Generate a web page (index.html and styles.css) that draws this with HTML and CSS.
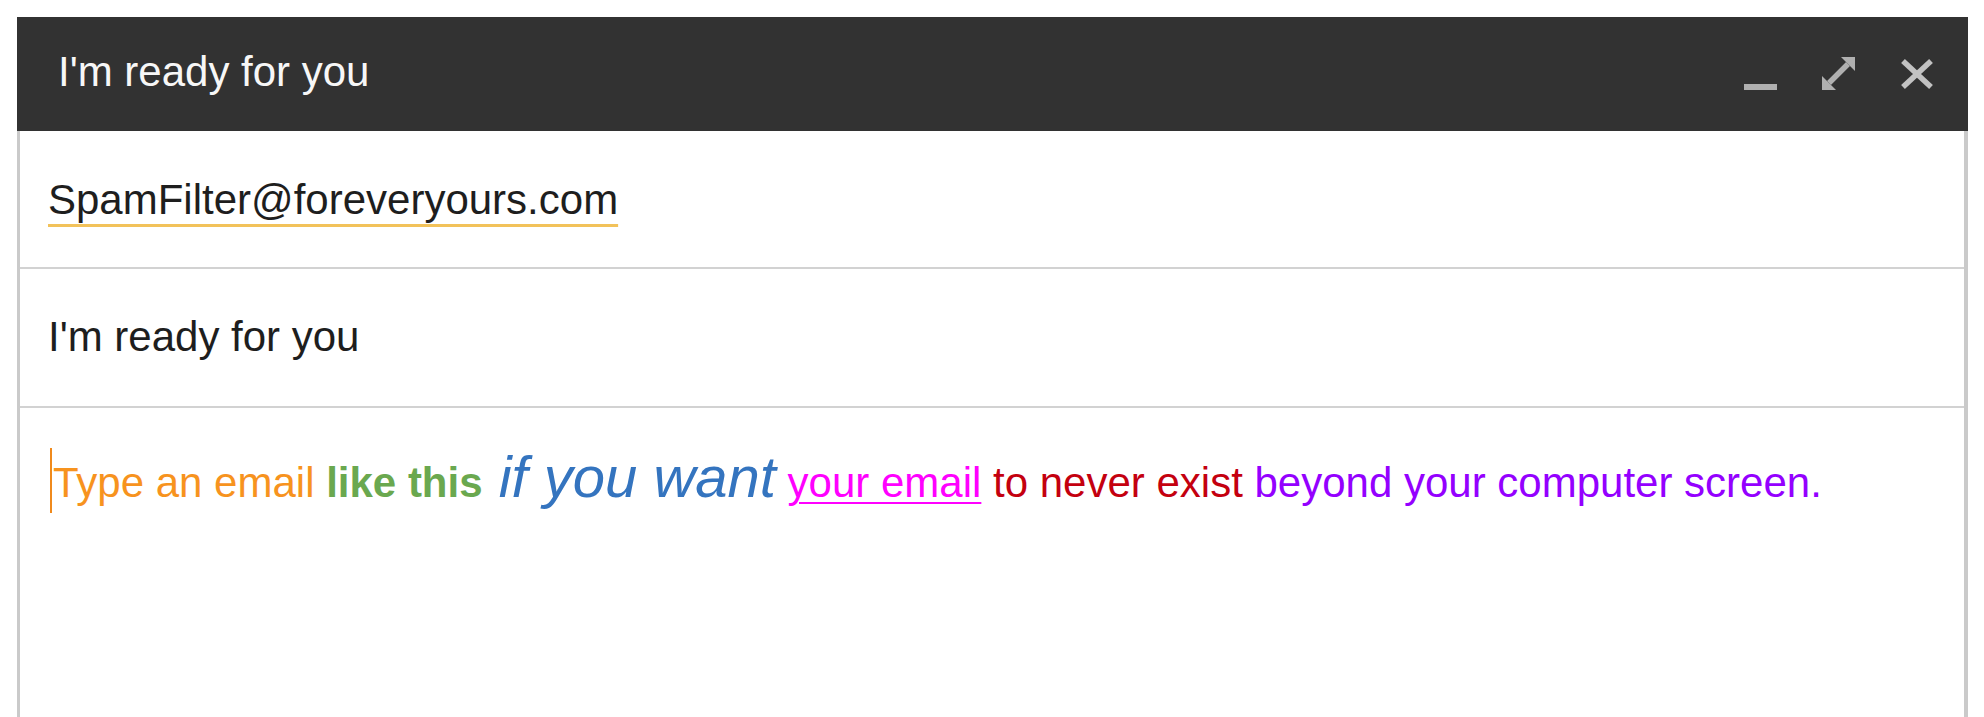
FILE: index.html
```html
<!DOCTYPE html>
<html lang="en">
<head>
<meta charset="utf-8">
<title>I'm ready for you</title>
<link rel="stylesheet" href="styles.css">
</head>
<body>
  <div class="window">
    <div class="header">
      <div class="title">I'm ready for you</div>
      <div class="controls">
        <svg class="icon" viewBox="0 0 34 36" width="34" height="36" aria-label="Minimize">
          <rect x="0" y="30" width="33" height="6" fill="#b0b0b0"/>
        </svg>
        <svg class="icon" viewBox="0 0 34 36" width="34" height="36" aria-label="Full screen">
          <polygon points="19,3 33,3 33,17" fill="#b0b0b0"/>
          <polygon points="0,22 0,36 14,36" fill="#b0b0b0"/>
          <line x1="7" y1="29" x2="26" y2="10" stroke="#b0b0b0" stroke-width="5.5"/>
        </svg>
        <svg class="icon" viewBox="0 0 34 36" width="34" height="36" aria-label="Close">
          <line x1="3" y1="7" x2="31" y2="33" stroke="#c2c2c2" stroke-width="5.5"/>
          <line x1="31" y1="7" x2="3" y2="33" stroke="#c2c2c2" stroke-width="5.5"/>
        </svg>
      </div>
    </div>
    <div class="compose">
      <div class="row row-to">
        <span class="recipient">SpamFilter@foreveryours.com</span>
      </div>
      <div class="row row-subject">
        <span class="subject">I'm ready for you</span>
      </div>
      <div class="body-area">
        <p class="message"><span class="caret"></span><span class="c-orange">Type an email </span><b class="c-green">like this</b><i class="c-blue"> if you want</i> <u class="c-magenta">your email</u><span class="c-red"> to never exist</span><span class="c-purple"> beyond your computer screen.</span></p>
      </div>
    </div>
  </div>
</body>
</html>
```

FILE: styles.css
```css
html, body {
  margin: 0;
  padding: 0;
  background: #ffffff;
  height: 100%;
  overflow: hidden;
}

body {
  font-family: "Liberation Sans", Arial, Helvetica, sans-serif;
  padding: 17px 0 0 17px;
  box-sizing: border-box;
}

.window {
  width: 1951px;
  display: flex;
  flex-direction: column;
  height: 700px;
}

.header {
  height: 114px;
  background: #323232;
  display: flex;
  align-items: center;
  justify-content: space-between;
  padding: 0 34px 5px 41px;
  box-sizing: border-box;
  flex-shrink: 0;
}

.title {
  color: #f7f7f7;
  font-size: 42px;
  line-height: 48px;
}

.controls {
  display: flex;
  align-items: center;
  gap: 44px;
}

.icon {
  display: block;
}

.compose {
  flex: 1;
  border-left: 3px solid #cacaca;
  border-right: 4px solid #cacaca;
  display: flex;
  flex-direction: column;
}

.row {
  border-bottom: 2px solid #d2d2d2;
  padding-left: 28px;
  font-size: 42px;
  line-height: 48px;
  color: #1e1e1e;
  box-sizing: border-box;
}

.row-to {
  height: 138px;
  padding-top: 45px;
}

.row-subject {
  height: 139px;
  padding-top: 44px;
}

.recipient {
  text-decoration: underline;
  text-decoration-color: #f2c25a;
  text-decoration-thickness: 3px;
  text-underline-offset: 10px;
}

.body-area {
  flex: 1;
  padding: 36px 0 0 30px;
}

.message {
  margin: 0;
  font-size: 42px;
  line-height: 66px;
  white-space: nowrap;
}

.caret {
  display: inline-block;
  width: 2px;
  height: 65px;
  background: #f08a1c;
  vertical-align: -16px;
  margin-right: 1px;
}

.c-orange { color: #f7931e; }
.c-green { color: #6aa84f; font-weight: bold; }
.c-blue { color: #3474bf; font-style: italic; font-size: 58px; }
.c-magenta { color: #ff00ff; text-decoration-thickness: 2px; text-underline-offset: 5px; }
.c-red { color: #c4000f; }
.c-purple { color: #9400ff; }
```
